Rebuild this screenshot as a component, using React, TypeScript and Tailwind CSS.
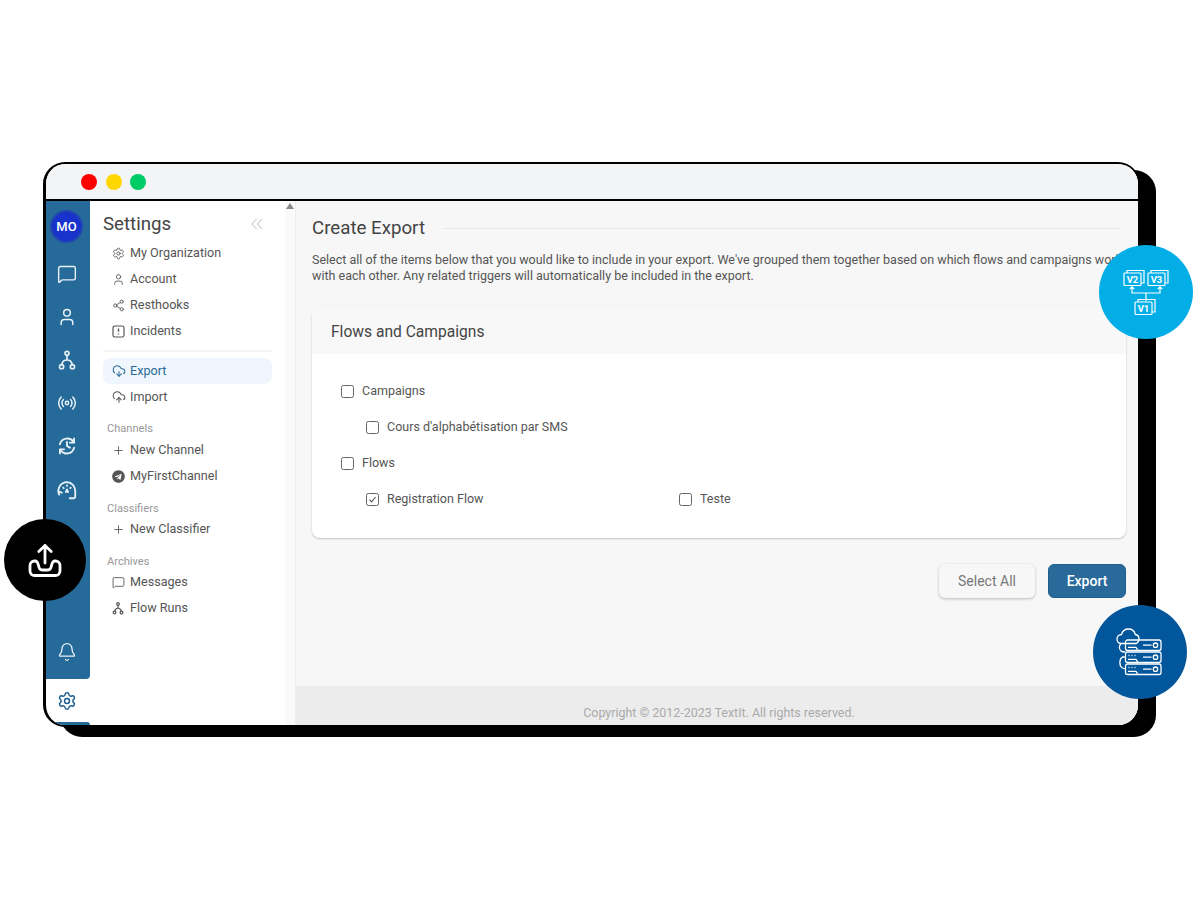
import { Bell, CloudDownload, CloudUpload, MessageSquare, Plus, Radio, Settings, Share2, User } from "lucide-react";
import type { ReactNode } from "react";
import { FaTelegram } from "react-icons/fa";

function FlowIcon() {
  return (
    <svg width="20" height="20" viewBox="0 0 24 24" fill="none" stroke="currentColor" strokeWidth="2" strokeLinecap="round">
      <circle cx="12" cy="4" r="2.4" />
      <circle cx="5.500" cy="20" r="2.500" />
      <circle cx="18.500" cy="20" r="2.500" />
      <path d="M12 6.500V12M12 12c-3 0-5.500 1-6.300 5.500M12 12c3 0 5.500 1 6.300 5.500" />
    </svg>
  );
}

function HistoryIcon() {
  return (
    <svg width="20" height="20" viewBox="0 0 24 24" fill="none" stroke="currentColor" strokeWidth="2.200" strokeLinecap="round" strokeLinejoin="round">
      <path d="M3.500 10A9 9 0 0 1 20 7.500M20.500 14A9 9 0 0 1 4 16.500" />
      <path d="M20.500 3v5h-5M3.500 21v-5h5" />
      <path d="M12 7v5l3.500 2" />
    </svg>
  );
}

function GaugeIcon() {
  return (
    <svg width="22" height="22" viewBox="0 0 24 24" fill="none" stroke="currentColor" strokeWidth="2" strokeLinecap="round" strokeLinejoin="round">
      <path d="M3.500 17A9.500 9.500 0 0 1 12 3.500 9.500 9.500 0 0 1 21 13v6a2 2 0 0 1-2 2h-4" />
      <path d="M2.800 13.500 6.500 15" />
      <path d="M12 7v.5M8 9.500l.4.4M16 9.500l-.4.4" />
      <path d="M12 11.500l1.200 2.600h-2.400z" fill="currentColor" />
    </svg>
  );
}

function AlertBox() {
  return (
    <svg width="13" height="13" viewBox="0 0 13 13" fill="none" stroke="currentColor" strokeWidth="1.200">
      <rect x="1" y="1" width="11" height="11" rx="1.800" />
      <path d="M6.500 3.500v3.300M6.500 8.500v1" strokeWidth="1.400" />
    </svg>
  );
}

function SmallFlow() {
  return (
    <svg width="12" height="13" viewBox="0 0 12 13" fill="none" stroke="currentColor" strokeWidth="1.200">
      <circle cx="6" cy="2" r="1.300" />
      <circle cx="2.500" cy="10.500" r="1.400" />
      <circle cx="9.500" cy="10.500" r="1.400" />
      <path d="M6 3.300v2.700M6 6C4 6.400 3 7.400 2.700 9.100M6 6c2 .4 3 1.400 3.300 3.100" />
    </svg>
  );
}

function Row({ icon, label, active }: { icon: ReactNode; label: string; active?: boolean }) {
  return (
    <div
      className={`flex h-[26px] items-center rounded-lg pl-[9px] ${
        active ? "bg-[#eff6fd] text-[#2a6a97]" : "text-[#555555]"
      }`}
    >
      <span className="flex w-[18px] shrink-0 items-center justify-start">{icon}</span>
      <span className="text-[12.6px] leading-none">{label}</span>
    </div>
  );
}

function Group({ title, tight, children }: { title: string; tight?: boolean; children: ReactNode }) {
  return (
    <div>
      <div className="pl-1 text-[11.1px] leading-[14px] text-[#999999]">{title}</div>
      <div className={tight ? "" : "mt-[1px]"}>{children}</div>
    </div>
  );
}

function Check({ label, checked, className = "" }: { label: string; checked?: boolean; className?: string }) {
  return (
    <div className={`flex h-[36px] items-center ${className}`}>
      <span className="flex h-[13px] w-[13px] shrink-0 items-center justify-center rounded-[2.5px] border-[1.5px] border-[#666666] bg-white">
        {checked && (
          <svg width="9" height="9" viewBox="0 0 9 9" fill="none" stroke="#555555" strokeWidth="1.100">
            <path d="M1.500 4.600 3.600 6.800 7.600 2" />
          </svg>
        )}
      </span>
      <span className="ml-2 pt-[1px] text-[12.5px] leading-none text-[#555555]">{label}</span>
    </div>
  );
}

function VersionBox({ x, y, label }: { x: number; y: number; label: string }) {
  return (
    <g transform={`translate(${x} ${y})`}>
      <path d="M3 2.500V0h17v12.500h-3" />
      <rect x="0" y="2.500" width="17" height="12.500" rx="1" />
      <text x="8.500" y="12.300" textAnchor="middle" fontSize="9.500" fontWeight="700" fill="white" stroke="none" fontFamily="Roboto, sans-serif">
        {label}
      </text>
    </g>
  );
}

function VersionsIcon() {
  return (
    <svg width="52" height="52" viewBox="0 0 52 52" fill="none" stroke="white" strokeWidth="1.200">
      <VersionBox x={4} y={4.500} label="V2" />
      <VersionBox x={28} y={4.500} label="V3" />
      <VersionBox x={15} y={33.500} label="V1" />
      <path d="M12 21v6h28v-6M26 27v8M9.800 23l2.200-2.200 2.200 2.200M37.800 23l2.200-2.200 2.200 2.200" />
    </svg>
  );
}

function ServerUnit({ y }: { y: number }) {
  return (
    <g transform={`translate(0 ${y})`}>
      <path d="M11.500 0H43a2 2 0 0 1 2 2v6.500a2 2 0 0 1-2 2H11.500a2 2 0 0 1-2-2V2a2 2 0 0 1 2-2z" />
      <circle cx="39.500" cy="5.200" r="2.200" />
      <path d="M27 5.200h8.500M12.500 3.500h1M15.500 3.500h1M18.500 3.500h1M12 7.300h8l2 3.200" />
    </g>
  );
}

function CloudServerIcon() {
  return (
    <svg width="48" height="48" viewBox="0 0 48 48" fill="none" stroke="white" strokeWidth="1.300">
      <path d="M5.500 15.500C2.500 15.500 1 13.500 1 11c0-2.500 2-4.500 4.500-4.500C6.500 3 9.500 1 12.500 1c3.500 0 6 2.500 6.800 5.500 2 .3 3.700 2.300 3.700 4.500 0 2-1 3.500-2.500 4.500z" />
      <ServerUnit y={12} />
      <ServerUnit y={24} />
      <ServerUnit y={36} />
      <path d="M5 15.500C3 18 3 21 5 23c1 1 2.500 1 4.500 1M9.500 29H6.500C3 31 3 38 6.500 40l3 1" />
    </svg>
  );
}

function TrayUploadIcon() {
  return (
    <svg width="36" height="36" viewBox="0 0 36 36" fill="none" stroke="white" strokeWidth="2.800" strokeLinecap="round" strokeLinejoin="round">
      <path d="M18 21V3.500M11.800 9.500 18 3.500l6.200 6" />
      <path d="M7.500 19H8c2.500 0 3 2 3.500 4.500.5 3 1.500 4.500 3.500 4.500h6c2 0 3-1.500 3.500-4.500.5-2.500 1-4.500 3.500-4.500h.5a4.500 4.500 0 0 1 4.500 4.500v5.500a4.500 4.500 0 0 1-4.500 4.500h-21A4.500 4.500 0 0 1 3 29V23.500A4.500 4.500 0 0 1 7.500 19z" />
    </svg>
  );
}

export default function App() {
  return (
    <div className="relative h-[900px] w-[1200px] overflow-hidden bg-white pl-[43px] pt-[162px] font-['Roboto',sans-serif]">
      <div className="absolute left-[60px] top-[170px] h-[567px] w-[1096px] rounded-[22px] bg-black" />

      <div className="relative flex h-[565px] w-[1097px] flex-col overflow-hidden rounded-[22px] border-y-[2.5px] border-l-[3px] border-r-[2px] border-black bg-white">
        <div className="box-content flex h-[35px] shrink-0 items-center gap-[8.5px] border-b-[2.5px] border-black bg-[#f3f4f6] pl-[35px]">
          <span className="h-4 w-4 rounded-full bg-[#ff0000]" />
          <span className="h-4 w-4 rounded-full bg-[#ffd600]" />
          <span className="h-4 w-4 rounded-full bg-[#00cc66]" />
        </div>

        <div className="flex min-h-0 flex-1">
          <div className="flex w-[44px] shrink-0 flex-col">
            <div className="flex h-[478px] flex-col items-center rounded-br bg-[#256a99] pr-[3px] pt-[9px] text-[#e8f1f7]">
              <div className="flex h-[33px] w-[33px] items-center justify-center rounded-full border-2 border-[#2148b0] bg-[#1733cc] text-[13px] font-medium text-white">
                MO
              </div>
              <div className="mt-[21px] flex flex-col items-center gap-[23px]">
                <MessageSquare size={20} strokeWidth={1.7} />
                <User size={20} strokeWidth={1.8} />
                <FlowIcon />
                <Radio size={20} strokeWidth={1.8} />
                <HistoryIcon />
                <GaugeIcon />
              </div>
              <Bell size={20} strokeWidth={1.6} className="mb-[17px] mt-auto" />
            </div>
            <div className="flex h-[43px] items-center justify-center pr-[3px] text-[#1d5f91]">
              <Settings size={20} strokeWidth={1.8} />
            </div>
            <div className="flex-1 rounded-tr bg-[#256a99]" />
          </div>

          <div className="flex w-[206px] shrink-0 border-r border-[#eeeeee]">
            <div className="w-[195px] shrink-0 pl-[13px] pt-[13px]">
              <div className="flex h-5 w-[169px] items-center justify-between">
                <span className="pt-[1px] text-[18.7px] leading-none text-[#444444]">Settings</span>
                <span className="mr-[9px] text-[#d5d5d5]">
                  <svg width="12" height="12" viewBox="0 0 12 12" fill="none" stroke="currentColor" strokeWidth="1.200">
                    <path d="M5.500 1 .8 6l4.700 5M11 1 6.300 6l4.700 5" />
                  </svg>
                </span>
              </div>
              <div className="w-[169px]">
                <div className="mt-[6px] border-b-2 border-[#f5f5f5] pb-[6px]">
                  <Row icon={<Settings size={13} strokeWidth={1.6} />} label="My Organization" />
                  <Row icon={<User size={13} strokeWidth={1.6} />} label="Account" />
                  <Row icon={<Share2 size={13} strokeWidth={1.6} />} label="Resthooks" />
                  <Row icon={<AlertBox />} label="Incidents" />
                </div>
                <div className="mt-[6px]">
                  <Row active icon={<CloudDownload size={14} strokeWidth={1.8} />} label="Export" />
                  <Row icon={<CloudUpload size={14} strokeWidth={1.8} />} label="Import" />
                </div>
                <div className="mt-[12px]">
                  <Group title="Channels">
                    <Row icon={<Plus size={13} strokeWidth={1.6} />} label="New Channel" />
                    <Row icon={<FaTelegram size={13} />} label="MyFirstChannel" />
                  </Group>
                </div>
                <div className="mt-[13px]">
                  <Group title="Classifiers" tight>
                    <Row icon={<Plus size={13} strokeWidth={1.6} />} label="New Classifier" />
                  </Group>
                </div>
                <div className="mt-[13px]">
                  <Group title="Archives" tight>
                    <Row icon={<MessageSquare size={13} strokeWidth={1.6} />} label="Messages" />
                    <Row icon={<SmallFlow />} label="Flow Runs" />
                  </Group>
                </div>
              </div>
            </div>
            <div className="flex flex-1 justify-center bg-[#fafafa] pt-[2px]">
              <span className="h-0 w-0 border-x-[4px] border-b-[6px] border-x-transparent border-b-[#888888]" />
            </div>
          </div>

          <div className="flex min-w-0 flex-1 flex-col bg-[#f7f7f7]">
            <div className="flex-1 pl-4 pr-3">
              <div className="flex h-[51px] items-center pt-[3px]">
                <span className="text-[18.7px] leading-none text-[#444444]">Create Export</span>
                <span className="ml-[18px] mr-[6px] h-px flex-1 bg-[#eaeaea]" />
              </div>
              <p className="whitespace-nowrap text-[12.5px] leading-4 text-[#555555]">
                Select all of the items below that you would like to include in your export. We've grouped them together based on which flows and campaigns work
                <br />
                with each other. Any related triggers will automatically be included in the export.
              </p>
              <div className="mt-[24px] h-[230px] overflow-hidden rounded-lg bg-white shadow-[0_1px_2px_rgba(0,0,0,0.22)]">
                <div className="flex h-[46px] items-center bg-[#f8f8f8] pl-[19px] pt-[3px] text-[15.6px] text-[#444444]">
                  Flows and Campaigns
                </div>
                <div className="pl-[29px] pt-[19px]">
                  <Check label="Campaigns" />
                  <Check className="ml-[25px]" label="Cours d'alphabétisation par SMS" />
                  <Check label="Flows" />
                  <div className="ml-[25px] flex">
                    <Check className="w-[313px]" checked label="Registration Flow" />
                    <Check label="Teste" />
                  </div>
                </div>
              </div>
              <div className="mt-[26px] flex justify-end gap-[13px]">
                <button className="h-[34px] w-[96px] rounded-md bg-[#f7f7f7] text-[14px] text-[#777777] shadow-[0_1px_3px_rgba(0,0,0,0.25)]">
                  Select All
                </button>
                <button className="h-[34px] w-[78px] rounded-md border border-[#1f5f8e] bg-[#2a6a9b] text-[14px] font-medium text-white">
                  Export
                </button>
              </div>
            </div>
            <div className="flex h-[39px] shrink-0 items-end justify-center bg-[#ececec] pb-[5px] pl-[4px] text-[12.45px] leading-[14px] text-[#aaaaaa]">
              Copyright © 2012-2023 TextIt. All rights reserved.
            </div>
          </div>
        </div>
      </div>

      <div className="absolute left-[4px] top-[519px] flex h-[82px] w-[82px] items-center justify-center rounded-full bg-black">
        <TrayUploadIcon />
      </div>
      <div className="absolute left-[1099px] top-[245px] flex h-[94px] w-[94px] items-center justify-center rounded-full bg-[#03aee6]">
        <VersionsIcon />
      </div>
      <div className="absolute left-[1093px] top-[605px] flex h-[94px] w-[94px] items-center justify-center rounded-full bg-[#02569b]">
        <CloudServerIcon />
      </div>
    </div>
  );
}
